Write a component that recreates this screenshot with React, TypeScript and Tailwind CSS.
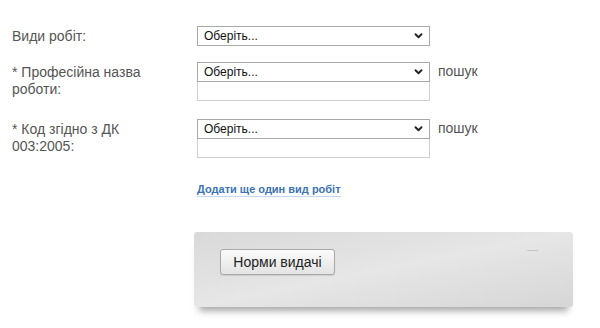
export default function App() {
  const Chevron = () => (
    <svg className="w-[9px] h-[6px]" viewBox="0 0 10 7" fill="none" stroke="#222" strokeWidth="2.2" strokeLinecap="round" strokeLinejoin="round">
      <polyline points="1.5 1.5 5 5 8.5 1.5"></polyline>
    </svg>
  );

  const Select = () => (
    <div className="flex items-center justify-between w-[233px] h-[20px] border border-[#a9a9a9] bg-white pl-[6px] pr-[6px] text-[12px] text-[#111]">
      <span>Оберіть...</span>
      <Chevron />
    </div>
  );

  const Input = () => (
    <div className="w-[233px] h-[19px] border border-[#cfcfcf] border-t-0 bg-white"></div>
  );

  return (
    <div className="w-[600px] h-[328px] bg-white font-['Liberation_Sans',Arial,sans-serif] text-[14px] leading-[17px] text-[#555] pt-[26px] pl-[12px]">
      <div className="flex">
        <div className="w-[185px] pr-[25px] pt-[2px]">Види робіт:</div>
        <Select />
      </div>

      <div className="flex mt-[16px]">
        <div className="w-[185px] pr-[25px] pt-[2px]">* Професійна назва роботи:</div>
        <div>
          <Select />
          <Input />
        </div>
        <div className="ml-[8px] pt-[1px]">пошук</div>
      </div>

      <div className="flex mt-[18px]">
        <div className="w-[185px] pr-[25px] pt-[2px]">* Код згідно з ДК 003:2005:</div>
        <div>
          <Select />
          <Input />
        </div>
        <div className="ml-[8px] pt-[1px]">пошук</div>
      </div>

      <div className="ml-[185px] mt-[22px]">
        <a href="#" className="text-[11px] leading-[14px] font-bold text-[#3a72b5] border-b border-[#c5d7ec] pb-[1px]">
          Додати ще один вид робіт
        </a>
      </div>

      <div className="ml-[182px] mt-[35px] w-[379px] h-[75px] relative rounded-[3px] bg-gradient-to-br from-[#d9d9d9] via-[#e6e6e6] to-[#d6d6d6] shadow-[0_9px_7px_-5px_rgba(0,0,0,0.35)] pt-[17px] pl-[26px]">
        <span className="absolute left-[333px] top-[18px] w-[11px] h-[1px] bg-[#c4c4c4]"></span>
        <button className="w-[115px] h-[26px] rounded-[3px] border border-[#a8a8a8] bg-gradient-to-b from-[#fbfbfb] to-[#e3e3e3] text-[14px] text-[#222] shadow-[0_1px_1px_rgba(0,0,0,0.1)]">
          Норми видачі
        </button>
      </div>
    </div>
  );
}
